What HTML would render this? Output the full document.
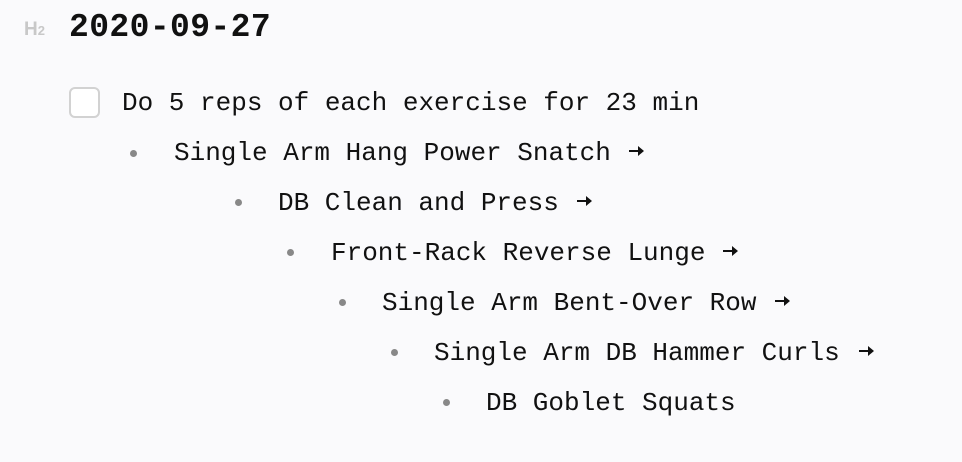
<!DOCTYPE html>
<html><head><style>
body{margin:0;width:962px;height:462px;background:#fafafc;font-family:"Liberation Mono",monospace;color:#111;position:relative;overflow:hidden}
.a{position:absolute;white-space:pre}
.t{font-size:26px;letter-spacing:0;line-height:30px}
.b{position:absolute;width:7px;height:7px;border-radius:50%;background:#888}
svg{position:absolute}
</style></head><body>
<div class="a" style="left:24px;top:19px;font-size:19px;font-weight:bold;color:#c8c8c8;font-family:'Liberation Sans',sans-serif">H<span style="font-size:13px">2</span></div>
<div class="a" style="left:69px;top:8px;font-size:33px;font-weight:bold;letter-spacing:0.4px;line-height:40px">2020-09-27</div>
<div style="position:absolute;left:69px;top:87px;width:27px;height:27px;border:2px solid #d2d2d2;border-radius:6px;background:#fff"></div>
<div class="a t" style="left:122px;top:88px">Do 5 reps of each exercise for 23 min</div>
<div class="b" style="left:130px;top:150px"></div><div class="a t" style="left:174px;top:138px">Single Arm Hang Power Snatch</div>
<svg style="left:629px;top:145px" width="16" height="12" viewBox="0 0 16 12"><path d="M0 5h9V1l6 5-6 5V7H0z" fill="#111"/></svg>
<div class="b" style="left:235px;top:199px"></div><div class="a t" style="left:278px;top:188px">DB Clean and Press</div>
<svg style="left:577px;top:195px" width="16" height="12" viewBox="0 0 16 12"><path d="M0 5h9V1l6 5-6 5V7H0z" fill="#111"/></svg>
<div class="b" style="left:287px;top:249px"></div><div class="a t" style="left:331px;top:238px">Front-Rack Reverse Lunge</div>
<svg style="left:723px;top:245px" width="16" height="12" viewBox="0 0 16 12"><path d="M0 5h9V1l6 5-6 5V7H0z" fill="#111"/></svg>
<div class="b" style="left:339px;top:299px"></div><div class="a t" style="left:382px;top:288px">Single Arm Bent-Over Row</div>
<svg style="left:775px;top:295px" width="16" height="12" viewBox="0 0 16 12"><path d="M0 5h9V1l6 5-6 5V7H0z" fill="#111"/></svg>
<div class="b" style="left:391px;top:349px"></div><div class="a t" style="left:434px;top:338px">Single Arm DB Hammer Curls</div>
<svg style="left:859px;top:345px" width="16" height="12" viewBox="0 0 16 12"><path d="M0 5h9V1l6 5-6 5V7H0z" fill="#111"/></svg>
<div class="b" style="left:443px;top:399px"></div><div class="a t" style="left:486px;top:388px">DB Goblet Squats</div>
</body></html>
